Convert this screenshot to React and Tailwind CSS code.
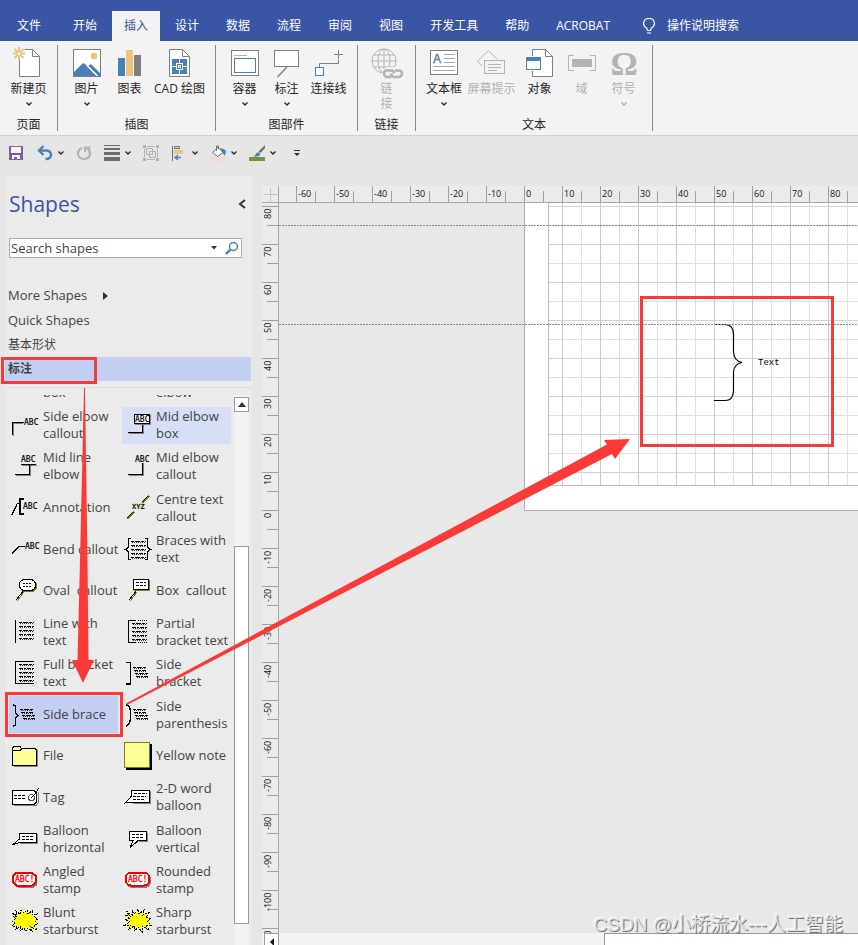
import { Fragment } from "react";

const SHADE = "#7f7f7f";
const BLUE = "#4a80b8";
const SAND = "#edc47c";
const OFF = "#b5b1b5";

const tabs = ["开始", "插入", "设计", "数据", "流程", "审阅", "视图", "开发工具", "帮助", "ACROBAT"];

/* ---------- ribbon icons ---------- */

const Big = ({ children }) => (
  <svg viewBox="0 0 32 32" className="size-8 shrink-0 overflow-visible" fill="none" stroke={SHADE} aria-hidden="true">
    {children}
  </svg>
);

const NewPageIcon = () => (
  <Big>
    <path d="M6.500 12V29.500H26.500V9.500L19.500 2.500H12" fill="#fff" />
    <path d="M19.500 2.500V9.500H26.500" />
    <g stroke={SAND} strokeWidth="2">
      <path d="M6 0V4M6 8.500V12.500M0 6.500H4M8 6.500H12M1.500 2L4.500 5M7.500 8L10.500 11M10.500 2L7.500 5M4.500 8L1.500 11" />
      <circle cx="6" cy="6.500" r="2.200" strokeWidth="1.300" />
    </g>
  </Big>
);

const PictureIcon = () => (
  <Big>
    <rect x="2.500" y="2.500" width="27" height="27" fill="#fff" />
    <circle cx="23" cy="9" r="3.200" fill={SAND} stroke="none" />
    <path d="M3 25L11 17Q12.500 15.500 14 17L26 29H3Z" fill={BLUE} stroke="none" />
    <path d="M17 19L19 17.500Q20 17 21 18L29 26V29H27Z" fill={BLUE} stroke="none" />
    <path d="M16 18.500L26.500 29" stroke="#fff" strokeWidth="1.400" />
    <path d="M2.500 29.500H29.500" />
  </Big>
);

const ChartIcon = () => (
  <Big>
    <g stroke="none">
      <rect x="4" y="11" width="7" height="18" fill={BLUE} />
      <rect x="12" y="3" width="7" height="26" fill={SAND} />
      <rect x="20" y="8" width="7" height="21" fill={SHADE} />
    </g>
  </Big>
);

const CadIcon = () => (
  <Big>
    <path d="M5.500 2.500H18.500L25.500 9.500V29.500H5.500Z" fill="#fff" />
    <path d="M18.500 2.500V9.500H25.500" />
    <rect x="8" y="12" width="15" height="15" fill={BLUE} stroke="none" />
    <path d="M15.500 12V27M8 19.500H23" stroke="#fff" />
    <rect x="12.500" y="16.500" width="6" height="6" fill={BLUE} stroke="#fff" />
    <rect x="14.500" y="18.500" width="2" height="2" fill={BLUE} stroke="#fff" />
  </Big>
);

const ContainerIcon = () => (
  <Big>
    <rect x="2.500" y="3.500" width="27" height="25" fill="#fff" />
    <path d="M5 8.500H18" stroke="#b4b4b4" />
    <rect x="5.500" y="11.500" width="21" height="14" stroke={BLUE} />
  </Big>
);

const CalloutIcon = () => (
  <Big>
    <rect x="3.500" y="3.500" width="24" height="16" fill="#fff" />
    <path d="M16 20L6.500 30" strokeWidth="1.300" />
  </Big>
);

const ConnectorIcon = () => (
  <Big>
    <path d="M6.500 20V16.500H25.500V13M25.500 3V12M21 7.500H30" />
    <rect x="2.500" y="20.500" width="8" height="8" fill="#fff" stroke={BLUE} />
  </Big>
);

const LinkIcon = () => (
  <Big>
    <g stroke={OFF}>
      <circle cx="13" cy="14" r="12" fill="#f7f2f7" />
      <ellipse cx="13" cy="14" rx="6" ry="12" />
      <path d="M13 2V26M1 14H25M3 8H23M3 20H23" />
      <g stroke="#f3f3f3" strokeWidth="6">
        <rect x="14" y="23" width="10" height="6" rx="3" />
        <rect x="20" y="23" width="10" height="6" rx="3" />
      </g>
      <g strokeWidth="2.400">
        <path d="M20 30H16Q13 29.500 13 26.500Q13 23.500 16 23.500H20Q23 23.500 23 26.500" />
        <path d="M24 23.500H28Q31 24 31 26.500Q31 29.500 28 30H23Q20 29.500 20 26.500" />
      </g>
    </g>
  </Big>
);

const TextBoxIcon = () => (
  <Big>
    <rect x="2.500" y="3.500" width="27" height="24" fill="#fff" />
    <text x="5" y="16" fill={BLUE} stroke={BLUE} strokeWidth="0.400" fontSize="12" fontFamily="Liberation Sans">A</text>
    <path d="M16 7.500H27M16 11.500H27M16 15.500H27M5 19.500H27M5 23.500H27" stroke="#a8a8a8" />
  </Big>
);

const ScreenTipIcon = () => (
  <Big>
    <g stroke={OFF}>
      <path d="M6 19L1.500 14L12.500 3.500L21 12" fill="#f7f2f7" />
      <rect x="8.500" y="13.500" width="20" height="13" fill="#f7f2f7" />
      <path d="M12 17.500H25M12 20.500H25M12 23.500H21" />
    </g>
  </Big>
);

const ObjectIcon = () => (
  <Big>
    <path d="M8.500 2.500H21.500L28.500 9.500V29.500H8.500Z" fill="#fff" />
    <path d="M21.500 2.500V9.500H28.500" />
    <rect x="1" y="9" width="18" height="15" fill="#fff" stroke="none" />
    <rect x="2.500" y="10.500" width="14" height="12" fill="#fff" stroke={BLUE} />
    <rect x="2" y="10" width="15" height="4" fill={BLUE} stroke="none" />
  </Big>
);

const FieldIcon = () => (
  <Big>
    <g stroke={OFF}>
      <path d="M8 8.500H2.500V23.500H8M24 8.500H29.500V23.500H24" />
      <rect x="6" y="12" width="20" height="8" fill={OFF} stroke="none" />
    </g>
  </Big>
);

const SymbolIcon = () => (
  <Big>
    <text x="16" y="28" textAnchor="middle" fill={OFF} stroke="none" fontSize="34" fontWeight="700" fontFamily="Liberation Serif">Ω</text>
  </Big>
);

const Chevron = () => (
  <svg viewBox="0 0 6 6" className="size-1.5 shrink-0" fill="none" stroke="currentColor" strokeWidth="1.300" aria-hidden="true">
    <path d="M0.500 1.500L3 4L5.500 1.500" />
  </svg>
);

const groups = [
  {
    name: "页面",
    width: "w-[57px]",
    items: [{ label: "新建页", icon: NewPageIcon, width: "w-[56px]", menu: true }],
  },
  {
    name: "插图",
    width: "w-[157px]",
    items: [
      { label: "图片", icon: PictureIcon, width: "w-[43px]", menu: true },
      { label: "图表", icon: ChartIcon, width: "w-[43px]" },
      { label: "CAD 绘图", icon: CadIcon, width: "w-[57px]" },
    ],
  },
  {
    name: "图部件",
    width: "w-[141px]",
    items: [
      { label: "容器", icon: ContainerIcon, width: "w-[42px]", menu: true },
      { label: "标注", icon: CalloutIcon, width: "w-[42px]", menu: true },
      { label: "连接线", icon: ConnectorIcon, width: "w-[42px]" },
    ],
  },
  {
    name: "链接",
    width: "w-[57px]",
    items: [{ label: "链接", icon: LinkIcon, width: "w-[42px]", off: true, stacked: true }],
  },
  {
    name: "文本",
    width: "w-[236px]",
    items: [
      { label: "文本框", icon: TextBoxIcon, width: "w-[43px]", menu: true },
      { label: "屏幕提示", icon: ScreenTipIcon, width: "w-[52px]", off: true },
      { label: "对象", icon: ObjectIcon, width: "w-[44px]" },
      { label: "域", icon: FieldIcon, width: "w-[40px]", off: true },
      { label: "符号", icon: SymbolIcon, width: "w-[44px]", off: true, menu: true },
    ],
  },
];

const RibbonButton = ({ item }) => {
  const Icon = item.icon;
  return (
    <button
      disabled={item.off}
      className={`${item.width} flex flex-col items-center whitespace-nowrap ${item.off ? "text-[#b1b1b1]" : "text-[#262626]"}`}
    >
      <Icon />
      {item.stacked ? (
        <span className="w-3 whitespace-normal leading-[15px] mt-0.5">{item.label}</span>
      ) : (
        <span className="leading-5">{item.label}</span>
      )}
      {item.menu && (
        <span className="pt-0.5">
          <Chevron />
        </span>
      )}
    </button>
  );
};

/* ---------- quick access icons ---------- */

const Small = ({ children }) => (
  <svg viewBox="0 0 16 16" className="size-4 shrink-0" fill="none" aria-hidden="true">
    {children}
  </svg>
);

const SaveIcon = () => (
  <Small>
    <path d="M0 1H14V15H0Z" fill="#8a56ab" />
    <path d="M2 2H12V8H2ZM3 10H11V14H8V12H5V14H3Z" fill="#fff" />
  </Small>
);

const UndoIcon = () => (
  <Small>
    <path d="M2 5.500H9.500Q14 6 14 10Q14 14 8.500 14" stroke={BLUE} strokeWidth="2.400" />
    <path d="M6.500 1L2 5.500L6.500 10" stroke={BLUE} strokeWidth="2.400" />
  </Small>
);

const RedoIcon = () => (
  <Small>
    <path d="M6 3Q2 4.500 2 8.500Q2.500 14 8 14Q14 13.500 14 8.500Q14 5 11 3" stroke={OFF} strokeWidth="2.200" />
    <path d="M9 7V2.500H14.500" stroke={OFF} strokeWidth="2" />
  </Small>
);

const LinesIcon = () => (
  <Small>
    <path d="M0 0H16V1H0ZM0 3H16V5H0ZM0 7H16V10H0ZM0 12H16V16H0Z" fill="#6e6e6e" />
  </Small>
);

const GroupIcon = () => (
  <Small>
    <path d="M0 0H3V3H0ZM13 0H16V3H13ZM0 13H3V16H0ZM13 13H16V16H13Z" fill={OFF} />
    <path d="M4 1.500H12M4 14.500H12M1.500 4V12M14.500 4V12M3.500 3.500H9.500V9.500H3.500ZM6.500 6.500H12.500V12.500H6.500Z" stroke={OFF} />
  </Small>
);

const AlignIcon = () => (
  <Small>
    <path d="M1.500 1V16M3.500 1.500H8.500V3.500H3.500Z" stroke="#6e6e6e" />
    <path d="M3 5H12V9H3Z" fill={SAND} />
    <path d="M4 12.500H10M7 10L4 12.500L7 15" stroke={BLUE} strokeWidth="1.400" />
  </Small>
);

const BucketIcon = () => (
  <Small>
    <path d="M2.500 7.500L8 2.500L13 7.500L7.500 11.500Z" fill="#fff" stroke="#6e6e6e" />
    <path d="M6.500 6V1H8.500V4" stroke="#6e6e6e" />
    <path d="M10 3Q16 4 16 7L14.500 11L12.500 7.500Z" fill={BLUE} />
    <path d="M0 12H16V16H0Z" fill="#f2d9d9" />
  </Small>
);

const PenIcon = () => (
  <Small>
    <path d="M16 0V3L11.500 8L9.500 6.500Z" fill="#6e6e6e" />
    <path d="M9 7L11.500 9Q11 12 4 11.500Q6.500 10.500 7 8.500Z" fill={BLUE} />
    <path d="M0 12H16V16H0Z" fill="#76933c" />
  </Small>
);

const quickTools = [
  { name: "保存", icon: SaveIcon },
  { name: "撤消", icon: UndoIcon, menu: true },
  { name: "重复", icon: RedoIcon },
  { name: "线条", icon: LinesIcon, menu: true },
  { name: "组合", icon: GroupIcon },
  { name: "对齐", icon: AlignIcon, menu: true },
  { name: "填充", icon: BucketIcon, menu: true },
  { name: "画笔", icon: PenIcon, menu: true },
];

/* ---------- stencil masters ---------- */

const Abc = ({ x, y }) => (
  <text x={x} y={y} fill="#000" stroke="#000" strokeWidth="0.200" fontSize="8" fontFamily="DejaVu Sans Mono">ABC</text>
);

// rows of dashes standing in for paragraph text
const Scribble = ({ x, y, w, rows, step = 4, slant = 0 }) => (
  <g strokeWidth="1">
    {Array.from({ length: rows }, (_, i) => (
      <Fragment key={i}>
        <path d={`M${x + i * slant} ${y + i * step + 0.5}h${w}`} strokeDasharray={i % 2 ? "4 1 2 1" : "3 1 5 1"} />
        <path d={`M${x + i * slant + 1} ${y + i * step + 1.5}h${w - 1}`} strokeDasharray="1 1" stroke="#333" />
      </Fragment>
    ))}
  </g>
);

const art = {
  sideElbow: (
    <>
      <path d="M2.500 25V12.500H12" stroke="#808080" />
      <path d="M1.500 24V11.500H13" />
      <Abc x="13" y="14" />
    </>
  ),
  midBox: (
    <>
      <path d="M19.500 13V22.500H5" stroke="#808080" />
      <path d="M18.500 13V21.500H4" />
      <rect x="11.500" y="4.500" width="15" height="9" stroke="#808080" />
      <rect x="10.500" y="3.500" width="15" height="9" fill="#fff" />
      <Abc x="11" y="11" />
    </>
  ),
  midLine: (
    <>
      <path d="M11 13.500H26M19.500 13V23.500H5" stroke="#808080" />
      <path d="M10 12.500H25M18.500 12V22.500H4" />
      <Abc x="10" y="10" />
    </>
  ),
  midElbow: (
    <>
      <path d="M19.500 11V23.500H5" stroke="#808080" />
      <path d="M18.500 11V22.500H4" />
      <Abc x="11" y="10" />
    </>
  ),
  annotation: (
    <>
      <path d="M1 21L6 10L8 9" strokeWidth="1.300" />
      <path d="M13 4.500H9V19.500H13" strokeWidth="2" />
      <Abc x="12" y="15" />
    </>
  ),
  centre: (
    <>
      <path d="M3 25L10 18M18 9L25 2" stroke="#808000" strokeWidth="1.500" />
      <path d="M3 24L9 18M18 8L24 2" />
      <text x="8" y="15" fill="#000" stroke="#808000" strokeWidth="0.200" fontSize="7" fontWeight="700" fontFamily="DejaVu Sans Mono">XYZ</text>
    </>
  ),
  bend: (
    <>
      <path d="M1 19L8 11.500H14" strokeWidth="1.300" />
      <Abc x="14" y="14" />
    </>
  ),
  braces: (
    <>
      <path d="M7 3.500H4.500V12L1.500 14.500L4.500 17V24.500H7M21 3.500H23.500V12L26.500 14.500L23.500 17V24.500H21" strokeWidth="1.500" />
      <Scribble x={7} y={6} w={15} rows={5} />
    </>
  ),
  oval: (
    <>
      <path d="M6 25L13 16" stroke="#808000" />
      <path d="M5 24L13 14" />
      <rect x="9.500" y="4.500" width="16" height="11" rx="5" fill="#808000" stroke="#808000" />
      <rect x="8.500" y="3.500" width="16" height="11" rx="5" fill="#fff" />
      <path d="M12 7.500h9M12 10.500h9" strokeDasharray="2 1" />
    </>
  ),
  box: (
    <>
      <path d="M6 25L13 16" stroke="#808000" />
      <path d="M5 24L13 14" />
      <rect x="10.500" y="4.500" width="15" height="10" fill="#808000" stroke="#808000" />
      <rect x="9.500" y="3.500" width="15" height="10" fill="#fff" />
      <path d="M12 6.500h10M12 9.500h10" strokeDasharray="3 1" />
    </>
  ),
  lineText: (
    <>
      <path d="M4.500 2V25" strokeWidth="1.500" />
      <Scribble x={8} y={4} w={15} rows={5} />
    </>
  ),
  partial: (
    <>
      <path d="M12 2.500H4.500V24.500H12" strokeWidth="1.500" />
      <path d="M14 2.500H23M14 24.500H23" strokeDasharray="1 1" />
      <Scribble x={8} y={5} w={15} rows={5} />
    </>
  ),
  full: (
    <>
      <path d="M23 2.500H4.500V24.500H23" strokeWidth="1.500" />
      <Scribble x={8} y={5} w={15} rows={5} />
    </>
  ),
  sideBracket: (
    <>
      <path d="M2 3.500H6.500V25H2" strokeWidth="1.500" />
      <Scribble x={9} y={8} w={13} rows={4} step={3} slant={1} />
    </>
  ),
  sideBrace: (
    <>
      <path d="M2 3.500L4.500 5V12L7 14.500L4.500 17V24L2 25.500" strokeWidth="1.500" />
      <Scribble x={9} y={8} w={13} rows={4} step={3} slant={1} />
    </>
  ),
  sideParen: (
    <>
      <path d="M2 3.500Q6.500 5 6.500 11V18Q6 23 2 25.500" strokeWidth="1.500" />
      <Scribble x={9} y={8} w={13} rows={4} step={3} slant={1} />
    </>
  ),
  file: (
    <>
      <path d="M3 24.500H26.500V8" stroke="#808080" />
      <path d="M1.500 23.500V6L3 4.500H9L10.500 6.500H24L25.500 8V23.500Z" fill="#ffff98" />
      <path d="M2 8.500H9L11 6.500" />
    </>
  ),
  note: (
    <>
      <path d="M2 27H27V2" strokeWidth="2" />
      <rect x="0.500" y="0.500" width="25" height="25" fill="#ffff98" stroke="#808000" />
    </>
  ),
  tag: (
    <>
      <path d="M3 22.500H25L27 20V9" stroke="#808080" />
      <path d="M1.500 7.500H23L25.500 10V19L23 21.500H1.500Z" fill="#fff" />
      <path d="M3 12.500h12M3 15.500h11" strokeDasharray="3 1" />
      <circle cx="20.500" cy="14.500" r="3" fill="#fff" stroke="#555" />
      <path d="M20 14.500Q24 13 27.500 5" />
    </>
  ),
  word: (
    <>
      <path d="M9 20.500H26.500V8" stroke="#808080" />
      <path d="M7.500 7.500H25.500V19.500H6.500L1.500 20L7.500 13Z" fill="#fff" />
      <path d="M10 10.500h13M9 13.500h13M9 16.500h11" strokeDasharray="3 1" />
    </>
  ),
  horizontal: (
    <>
      <path d="M9 18.500H26.500V9" stroke="#808080" />
      <path d="M8.500 8.500H25.500V17.500H8.500L1.500 20L8.500 14Z" fill="#fff" />
      <path d="M11 11.500h12M11 14.500h12" strokeDasharray="3 1" />
    </>
  ),
  vertical: (
    <>
      <path d="M15 16.500H23.500V8" stroke="#808080" />
      <path d="M5.500 6.500H22.500V15.500H14L6 23L9 15.500H5.500Z" fill="#fff" />
      <path d="M8 9.500h12M8 12.500h12" strokeDasharray="3 1" />
    </>
  ),
  angled: (
    <>
      <path d="M7 21H22L26 18" stroke="#808080" strokeWidth="2" />
      <path d="M6 6.500H20.500L25 10V16L20.500 20H6L2 16V10Z" fill="#fff" stroke="#f00000" strokeWidth="2" />
      <text x="4" y="16" fill="#f00000" stroke="#f00000" strokeWidth="0.300" fontSize="8" fontFamily="DejaVu Sans Mono">ABC!</text>
    </>
  ),
  rounded: (
    <>
      <rect x="3" y="8" width="23" height="13" rx="5" stroke="#808080" strokeWidth="2" />
      <rect x="2" y="6.500" width="23" height="13" rx="5" fill="#fff" stroke="#f00000" strokeWidth="2" />
      <text x="4" y="16" fill="#f00000" stroke="#f00000" strokeWidth="0.300" fontSize="8" fontFamily="DejaVu Sans Mono">ABC!</text>
    </>
  ),
  blunt: (
    <path d="M1 6L6 8L5 4L9 7L10 3L13 6L16 3L17 7L21 4L21 8L26 7L23 10L27 12L24 14L27 17L23 18L26 23L20 20L21 24L17 21L15 24L13 21L9 24L9 20L5 22L6 19L1 19L4 16L1 14L5 12L2 9L5 9Z" fill="#ffff00" strokeDasharray="2 1" />
  ),
  sharp: (
    <path d="M2 4L8 8L8 3L11 7L14 2L15 7L20 3L19 8L26 5L22 10L27 12L23 14L27 18L22 18L25 23L18 19L18 25L14 20L11 24L10 19L4 23L7 18L1 18L6 15L1 13L6 11L1 8L6 9Z" fill="#ffff00" strokeDasharray="2 1" />
  ),
};

const masters = [
  { lines: ["", "box"] },
  { lines: ["", "elbow"] },
  { lines: ["Side elbow", "callout"], art: "sideElbow" },
  { lines: ["Mid elbow", "box"], art: "midBox", hover: true },
  { lines: ["Mid line", "elbow"], art: "midLine" },
  { lines: ["Mid elbow", "callout"], art: "midElbow" },
  { lines: ["Annotation"], art: "annotation" },
  { lines: ["Centre text", "callout"], art: "centre" },
  { lines: ["Bend callout"], art: "bend" },
  { lines: ["Braces with", "text"], art: "braces" },
  { lines: ["Oval  callout"], art: "oval" },
  { lines: ["Box  callout"], art: "box" },
  { lines: ["Line with", "text"], art: "lineText" },
  { lines: ["Partial", "bracket text"], art: "partial" },
  { lines: ["Full bracket", "text"], art: "full" },
  { lines: ["Side", "bracket"], art: "sideBracket" },
  { lines: ["Side brace"], art: "sideBrace", selected: true },
  { lines: ["Side", "parenthesis"], art: "sideParen" },
  { lines: ["File"], art: "file" },
  { lines: ["Yellow note"], art: "note" },
  { lines: ["Tag"], art: "tag" },
  { lines: ["2-D word", "balloon"], art: "word" },
  { lines: ["Balloon", "horizontal"], art: "horizontal" },
  { lines: ["Balloon", "vertical"], art: "vertical" },
  { lines: ["Angled", "stamp"], art: "angled" },
  { lines: ["Rounded", "stamp"], art: "rounded" },
  { lines: ["Blunt", "starburst"], art: "blunt" },
  { lines: ["Sharp", "starburst"], art: "sharp" },
];

const Master = ({ item }) => {
  let bg = "";
  if (item.hover) bg = "bg-[#d7dff7]";
  if (item.selected) bg = "bg-[#c2cef2]";
  return (
    <button className={`h-[37px] self-center flex items-center gap-1 pl-0.5 text-left text-[13px] leading-[17px] whitespace-pre ${bg}`}>
      <svg viewBox="0 0 28 28" className="size-7 shrink-0 overflow-visible" fill="none" stroke="#000" shapeRendering="crispEdges" aria-hidden="true">
        {item.art && art[item.art]}
      </svg>
      <span>
        {item.lines.map((line, i) => (
          <span key={i} className="block min-h-[17px]">{line}</span>
        ))}
      </span>
    </button>
  );
};

const ShapesPanel = () => (
  <aside className="w-[247px] shrink-0 mt-1.5 bg-[#ebebeb] flex flex-col text-[13px] text-[#444] overflow-hidden">
    <div className="flex items-center justify-between pt-[14px] pl-1 pr-1.5">
      <h2 className="text-[21px] leading-7 text-[#3955a3]">Shapes</h2>
      <button aria-label="Minimise the Shapes window">
        <svg viewBox="0 0 8 10" className="w-2 h-2.5" fill="none" stroke="#333" strokeWidth="2">
          <path d="M7 1L2 5L7 9" />
        </svg>
      </button>
    </div>

    <div className="ml-1 mr-2.5 mt-5 h-5 flex items-center border border-[#ababab] bg-white">
      <input aria-label="Search shapes" defaultValue="Search shapes" className="flex-1 min-w-0 pl-px h-full outline-none" />
      <button aria-label="Search history" className="px-2">
        <svg viewBox="0 0 6 4" className="w-1.5 h-1"><path d="M0 0H6L3 3.500Z" fill="#333" /></svg>
      </button>
      <button aria-label="Search" className="pr-0.5">
        <svg viewBox="0 0 14 14" className="size-3.5" fill="none" stroke={BLUE}>
          <circle cx="8.500" cy="5.500" r="4" strokeWidth="1.500" />
          <path d="M5.500 8.500L1 13" strokeWidth="2.400" />
        </svg>
      </button>
    </div>

    <nav className="mt-[25px] flex flex-col">
      <button className="h-[25px] pl-[3px] flex items-center gap-4 text-left">
        More Shapes
        <svg viewBox="0 0 5 8" className="w-[5px] h-2"><path d="M0 0L5 4L0 8Z" fill="#333" /></svg>
      </button>
      <button className="h-[25px] pl-[3px] text-left">Quick Shapes</button>
      <button className="h-6 pl-[3px] text-left text-xs">基本形状</button>
      <button className="h-6 pl-[3px] mr-px text-left text-xs font-bold bg-[#c2cef2]">标注</button>
    </nav>

    <div className="mt-1.5 border-t border-[#dcdcdc]" />

    <div className="mt-[7px] flex-1 min-h-0 flex overflow-hidden">
      <div className="-mt-8 ml-1 flex-1 h-[579px] grid grid-cols-[109px_109px] gap-x-1 auto-rows-fr">
        {masters.map((item, i) => (
          <Master key={i} item={item} />
        ))}
      </div>
      <div className="w-[15px] mr-[3px] pt-0.5 flex flex-col bg-[#f3f3f3]">
        <button aria-label="Scroll up" className="h-[15px] shrink-0 grid place-items-center border border-[#999] bg-white">
          <svg viewBox="0 0 8 5" className="w-2 h-[5px]"><path d="M0 5L4 0L8 5Z" fill="#333" /></svg>
        </button>
        <div className="mt-[134px] mb-[21px] flex-1 border border-[#999] bg-white" />
      </div>
    </div>
  </aside>
);

/* ---------- drawing window ---------- */

const topMarks = [-60, -50, -40, -30, -20, -10, 0, 10, 20, 30, 40, 50, 60, 70, 80, 90, 100, 110, 120];
const sideMarks = [80, 70, 60, 50, 40, 30, 20, 10, 0, -10, -20, -30, -40, -50, -60, -70, -80, -90, -100, -110];

const TopRuler = () => (
  <div className="flex-1 min-w-0 flex overflow-hidden pl-[17px] bg-[#ebebeb] border-b border-[#a6a6a6]">
    {topMarks.map((n) => (
      <div key={n} className="w-[38px] shrink-0 flex items-end border-l border-[#a0a0a0]">
        <span className="w-[18px] h-full pl-px text-[9px] leading-4 text-[#111]">{n}</span>
        <span className="h-[11px] border-l border-[#a0a0a0]" />
      </div>
    ))}
  </div>
);

const SideRuler = () => (
  <div className="w-[17px] shrink-0 flex flex-col overflow-hidden pt-[3px] bg-[#ebebeb] border-r border-[#a6a6a6]">
    {sideMarks.map((n) => (
      <div key={n} className="h-[38px] shrink-0 flex flex-col items-end border-t border-[#a0a0a0]">
        <span className="h-[18px] w-full pb-0.5 flex justify-end items-start text-[9px] leading-3 text-[#111] rotate-180 [writing-mode:vertical-rl]">
          {n}
        </span>
        <span className="w-[11px] border-t border-[#a0a0a0]" />
      </div>
    ))}
  </div>
);

const gridX = Array.from({ length: 60 }, (_, i) => 13.5 + i * 19);
const gridY = Array.from({ length: 15 }, (_, i) => 3.5 + i * 19);

const Page = () => (
  <div className="absolute left-[245px] right-0 top-0 h-[308px] pl-[23px] pb-6 bg-white border-l border-b border-[#a9b0b8] overflow-hidden">
    <svg className="w-full h-full overflow-hidden border-l border-b border-[#bdbdbd]" aria-hidden="true">
      {gridY.map((y, i) => (
        <line key={y} x1="0" x2="100%" y1={y} y2={y} stroke={i % 2 ? "#e0e0e0" : "#d0d0d0"} />
      ))}
      {gridX.map((x, i) => (
        <line key={x} x1={x} x2={x} y1="0" y2="100%" stroke={i % 2 ? "#e0e0e0" : "#cacaca"} />
      ))}
      <path
        d="M165 121.500H176Q184.500 122 184.500 131V149Q185 158 193 159.500Q185 161 184.500 169V188Q184 197.500 176 197.500H165"
        fill="none"
        stroke="#000"
        strokeWidth="1.200"
      />
      <text x="209" y="162" fontSize="9" fontFamily="Liberation Mono" fill="#000">Text</text>
    </svg>
  </div>
);

const Guide = ({ top }) => (
  <div className={`absolute inset-x-0 h-px ${top} bg-[repeating-linear-gradient(90deg,#888_0_2px,transparent_2px_3px)]`} />
);

const Workspace = () => (
  <main className="flex-1 min-w-0 ml-2.5 mt-4 flex flex-col">
    <div className="h-[17px] shrink-0 flex">
      <div className="w-[17px] grid place-items-center bg-[#ebebeb] border-r border-b border-[#a6a6a6]">
        <svg viewBox="0 0 15 15" className="size-[15px]" stroke="#c4c4c4"><path d="M7.500 1V15M1 7.500H15" /></svg>
      </div>
      <TopRuler />
    </div>
    <div className="flex-1 min-h-0 flex">
      <SideRuler />
      <div className="relative flex-1 overflow-hidden bg-[#e8e8e8]">
        <Page />
        <Guide top="top-[22px]" />
        <Guide top="top-[121px]" />
      </div>
    </div>
    <div className="h-3 shrink-0 flex pl-0.5 bg-[#f3f3f3] overflow-hidden">
      <button aria-label="Scroll left" className="w-[15px] h-[17px] shrink-0 grid place-items-center border border-[#999] bg-white">
        <svg viewBox="0 0 4 8" className="w-1 h-2"><path d="M4 0L0 4L4 8Z" fill="#111" /></svg>
      </button>
      <div className="ml-[325px] flex-1 h-[17px] border-t border-l border-[#999] bg-white" />
    </div>
  </main>
);

const Marks = () => (
  <svg className="absolute inset-0 w-full h-full pointer-events-none" fill="none" stroke="#fb3a38" strokeWidth="3" aria-hidden="true">
    <rect x="2.500" y="358.500" width="93" height="24" />
    <rect x="6.500" y="693.500" width="115" height="42" />
    <rect x="641.500" y="297.500" width="191" height="148" />
    <g fill="#fb3a38" stroke="none">
      <path d="M84 388H85L87.500 560L88.500 660H94L83 683L72 660H77.500L80 560Z" />
      <path d="M126 703.500L607 444.500L604 440L630 439L615 459L612 454L127 705Z" />
    </g>
  </svg>
);

export default function App() {
  return (
    <div className="relative h-screen flex flex-col overflow-hidden bg-[#e6e6e6] text-xs font-['Open_Sans','Noto_Sans_CJK_SC',sans-serif]">
      <header className="h-[41px] shrink-0 flex items-end pl-[5px] gap-[3px] bg-[#3955a3] text-white whitespace-nowrap">
        <button className="h-[30px] px-3 mr-[5px]">文件</button>
        {tabs.map((tab) => (
          <button
            key={tab}
            className={`h-[30px] px-3 ${tab === "插入" ? "bg-[#f3f3f3] text-[#3955a3]" : ""}`}
          >
            {tab}
          </button>
        ))}
        <button className="h-[30px] ml-[18px] flex items-center gap-3">
          <svg viewBox="0 0 12 16" className="w-3 h-4" fill="none" stroke="#fff" aria-hidden="true">
            <path d="M4 12V10.500Q0.500 8 0.500 5.500Q1 0.500 6 0.500Q11 0.500 11.500 5.500Q11.500 8 8 10.500V12M4 12.500H8M4 15H8" strokeWidth="1.200" />
          </svg>
          操作说明搜索
        </button>
      </header>

      <div className="h-[95px] shrink-0 flex bg-[#f3f3f3] border-b border-[#d2d2d2]">
        {groups.map((group) => (
          <Fragment key={group.name}>
            <section className={`${group.width} shrink-0 pt-1.5 pb-0.5 flex flex-col items-center justify-between`}>
              <div className="flex items-start">
                {group.items.map((item) => (
                  <RibbonButton key={item.label} item={item} />
                ))}
              </div>
              <h3 className="leading-4 text-[#262626]">{group.name}</h3>
            </section>
            <div className="w-px shrink-0 my-1 bg-[#8a8a8a]" />
          </Fragment>
        ))}
      </div>

      <div className="h-[34px] shrink-0 flex items-center gap-3 pl-[9px] text-[#262626]">
        {quickTools.map(({ name, icon: Icon, menu }) => (
          <button key={name} aria-label={name} className="flex items-center gap-[5px]">
            <Icon />
            {menu && <Chevron />}
          </button>
        ))}
        <button aria-label="自定义快速访问工具栏" className="ml-1.5">
          <svg viewBox="0 0 6 6" className="size-1.5"><path d="M0 0H6V1H0ZM0 3H6L3 6Z" fill="#333" /></svg>
        </button>
      </div>

      <div className="flex-1 min-h-0 flex pl-[5px]">
        <ShapesPanel />
        <Workspace />
      </div>

      <Marks />
      <p className="absolute right-[15px] bottom-1.5 text-[19px] leading-7 whitespace-nowrap text-[#dedede] [text-shadow:1px_1px_0_#777,-1px_-1px_0_#fff] font-['Liberation_Sans','Noto_Sans_CJK_SC',sans-serif]">
        CSDN @小桥流水---人工智能
      </p>
    </div>
  );
}
